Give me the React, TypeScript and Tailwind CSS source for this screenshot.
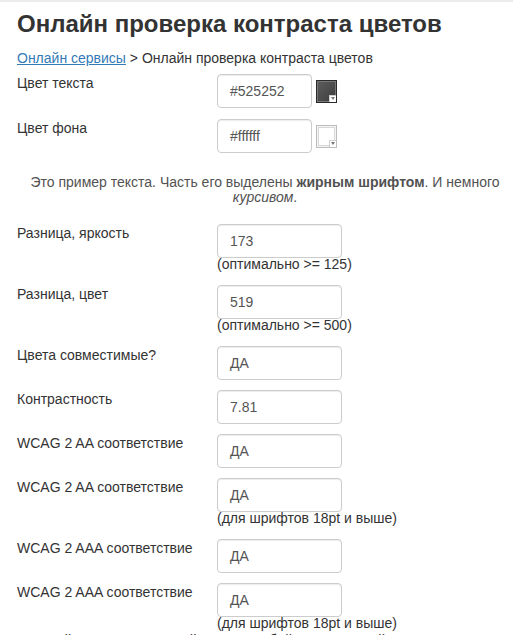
type Row = { label: string; value: string; note?: string };

const rows: Row[] = [
    { label: "Разница, яркость", value: "173", note: "(оптимально >= 125)" },
    { label: "Разница, цвет", value: "519", note: "(оптимально >= 500)" },
    { label: "Цвета совместимые?", value: "ДА" },
    { label: "Контрастность", value: "7.81" },
    { label: "WCAG 2 AA соответствие", value: "ДА" },
    { label: "WCAG 2 AA соответствие", value: "ДА", note: "(для шрифтов 18pt и выше)" },
    { label: "WCAG 2 AAA соответствие", value: "ДА" },
    { label: "WCAG 2 AAA соответствие", value: "ДА", note: "(для шрифтов 18pt и выше)" },
];

function Swatch({ dark }: { dark: boolean }) {
    return (
        <div
            className={
                dark
                    ? "relative w-[21px] h-[23px] border border-[#2a2a2a] p-[1px] bg-[#777]"
                    : "relative w-[21px] h-[23px] border border-[#bdbdbd] p-[1px] bg-[#f4f4f4]"
            }
        >
            <div
                className={
                    dark
                        ? "w-full h-full bg-gradient-to-br from-[#5c5c5c] to-[#3e3e3e]"
                        : "w-full h-full bg-white border border-[#d8d8d8]"
                }
            />
            <div className="absolute right-0 bottom-0 w-[7px] h-[7px] bg-white border-l border-t border-[#cfcfcf] flex items-center justify-center">
                <div className="w-0 h-0 border-l-[2px] border-r-[2px] border-t-[3px] border-l-transparent border-r-transparent border-t-[#777]" />
            </div>
        </div>
    );
}

function Field({ value, width }: { value: string; width: string }) {
    return (
        <div
            className={`${width} h-[34px] border border-[#cccccc] rounded-[4px] bg-white px-[12px] flex items-center text-[14px] text-[#555] shadow-[inset_0_1px_1px_rgba(0,0,0,0.075)]`}
        >
            {value}
        </div>
    );
}

export default function App() {
    return (
        <div
            className="w-[513px] h-[635px] overflow-hidden bg-white text-[#333] text-[14px]"
            style={{ fontFamily: '"Liberation Sans", Arial, sans-serif' }}
        >
            <div className="h-[2px] bg-[#ececec]" />
            <div className="pl-[17px]">
                <h1 className="pt-[9px] text-[24px] font-bold leading-[26px] text-[#333]">
                    Онлайн проверка контраста цветов
                </h1>
                <div className="mt-[11px] leading-[20px]">
                    <a href="#" className="text-[#337ab7] underline">
                        Онлайн сервисы
                    </a>{" "}
                    &gt; Онлайн проверка контраста цветов
                </div>

                <div className="mt-[5px] flex items-start mb-[10px]">
                    <div className="w-[200px] leading-[20px]">Цвет текста</div>
                    <div className="mt-[1px] flex items-center gap-[4px]">
                        <Field value="#525252" width="w-[95px]" />
                        <Swatch dark />
                    </div>
                </div>
                <div className="flex items-start">
                    <div className="w-[200px] leading-[20px]">Цвет фона</div>
                    <div className="mt-[1px] flex items-center gap-[4px]">
                        <Field value="#ffffff" width="w-[95px]" />
                        <Swatch dark={false} />
                    </div>
                </div>

                <p className="mt-[22px] mb-[18px] text-center leading-[15px] text-[#525252]">
                    Это пример текста. Часть его выделены <b>жирным шрифтом</b>. И немного{" "}
                    <i>курсивом</i>.
                </p>

                {rows.map((r, i) => (
                    <div key={i} className="flex items-start mb-[9px]">
                        <div className="w-[200px] leading-[20px]">{r.label}</div>
                        <div className="mt-[1px]">
                            <Field value={r.value} width="w-[125px]" />
                            {r.note && <div className="leading-[13px] mb-[4px] text-[#333]">{r.note}</div>}
                        </div>
                    </div>
                ))}
                <p className="-mt-[10px] leading-[15px]">Настройки контраста подойдут для любой страницы сайта</p>
            </div>
        </div>
    );
}
